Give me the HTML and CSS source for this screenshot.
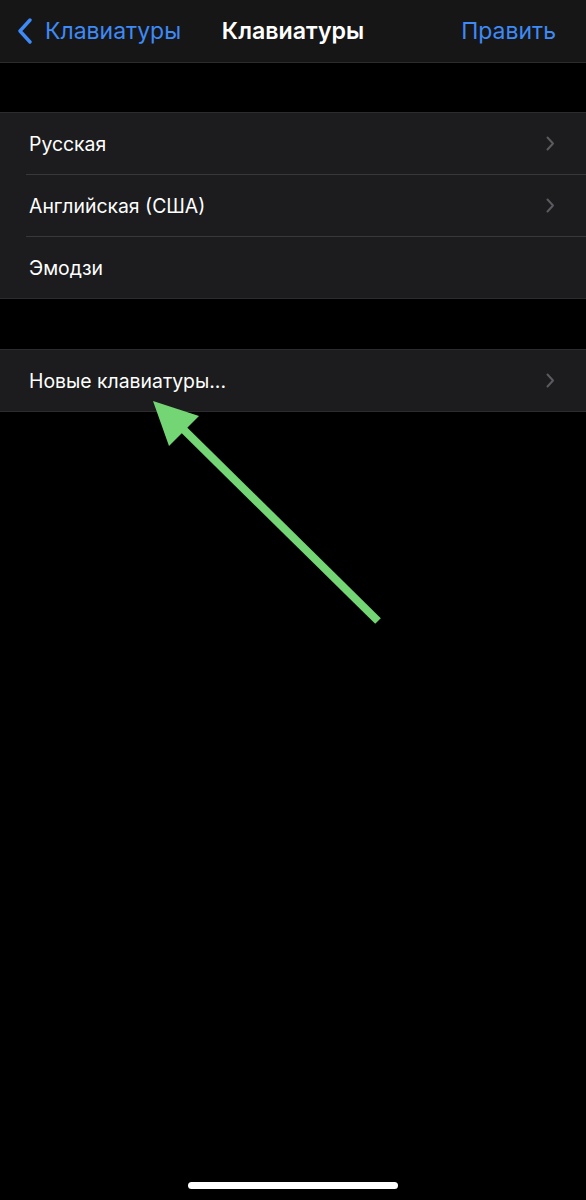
FILE: index.html
```html
<!DOCTYPE html>
<html lang="ru">

<head>
    <meta charset="UTF-8">
    <meta name="viewport" content="width=device-width, initial-scale=1.0">
    <title>Клавиатуры</title>
    <link rel="stylesheet" href="styles.css">
</head>

<body>
    <div class="screen">
        <div class="nav">
            <a class="nav-back" href="#">
                <svg class="back-chevron" width="16" height="26" viewBox="0 0 16 26">
                    <path d="M13 2 L3 13 L13 24" fill="none" stroke="currentColor" stroke-width="3.4"
                        stroke-linecap="round" stroke-linejoin="round" />
                </svg>
                <span>Клавиатуры</span>
            </a>
            <div class="nav-title">Клавиатуры</div>
            <a class="nav-action" href="#">Править</a>
        </div>

        <div class="group">
            <div class="row">
                <span class="row-label">Русская</span>
                <svg class="chevron" width="9" height="15" viewBox="0 0 9 15">
                    <path d="M1.5 1.5 L7 7.5 L1.5 13.5" fill="none" stroke="currentColor" stroke-width="2"
                        stroke-linecap="round" stroke-linejoin="round" />
                </svg>
            </div>
            <div class="row">
                <span class="row-label">Английская (США)</span>
                <svg class="chevron" width="9" height="15" viewBox="0 0 9 15">
                    <path d="M1.5 1.5 L7 7.5 L1.5 13.5" fill="none" stroke="currentColor" stroke-width="2"
                        stroke-linecap="round" stroke-linejoin="round" />
                </svg>
            </div>
            <div class="row">
                <span class="row-label">Эмодзи</span>
            </div>
        </div>

        <div class="group">
            <div class="row">
                <span class="row-label">Новые клавиатуры...</span>
                <svg class="chevron" width="9" height="15" viewBox="0 0 9 15">
                    <path d="M1.5 1.5 L7 7.5 L1.5 13.5" fill="none" stroke="currentColor" stroke-width="2"
                        stroke-linecap="round" stroke-linejoin="round" />
                </svg>
            </div>
        </div>

        <div class="home-indicator"></div>

        <!-- annotation arrow drawn over the screenshot -->
        <svg class="arrow" width="586" height="1200" viewBox="0 0 586 1200">
            <line x1="378" y1="621" x2="178" y2="424" stroke="#73d574" stroke-width="8" />
            <polygon points="153,401 199,416 169,446" fill="#73d574" />
        </svg>
    </div>
</body>

</html>
```

FILE: styles.css
```css
* {
    margin: 0;
    padding: 0;
    box-sizing: border-box;
}

body {
    background-color: #000;
    color: #fff;
    font-family: Inter, 'Noto Sans', 'Liberation Sans', sans-serif;
}

.screen {
    position: relative;
    width: 586px;
    height: 1200px;
    display: flex;
    flex-direction: column;
    overflow: hidden;
}

.nav {
    height: 63px;
    display: grid;
    grid-template-columns: 1fr auto 1fr;
    align-items: center;
    padding: 0 17px;
    background-color: #161616;
    border-bottom: 1px solid #2c2c2e;
}

.nav a {
    color: #3e8af6;
    text-decoration: none;
    font-size: 23px;
}

.nav-back {
    display: flex;
    align-items: center;
    gap: 12px;
}

.back-chevron {
    color: #3e8af6;
}

.nav-title {
    font-size: 23.2px;
    font-weight: 600;
    color: #fff;
}

.nav-action {
    justify-self: end;
    margin-right: 13px;
}

.group {
    margin-top: 49px;
    background-color: #1c1c1e;
    border-top: 1px solid #2c2c2e;
    border-bottom: 1px solid #2c2c2e;
}

.group + .group {
    margin-top: 50px;
}

.row {
    height: 61px;
    display: flex;
    align-items: center;
    justify-content: space-between;
    padding: 0 31px 0 29px;
}

.row + .row {
    height: 62px;
    border-top: 1px solid #38383a;
    margin-left: 26px;
    padding-left: 3px;
}

.row-label {
    font-size: 19.4px;
    color: #fff;
}

.chevron {
    color: #5a5a5f;
}

.home-indicator {
    width: 210px;
    height: 7px;
    border-radius: 4px;
    background-color: #fff;
    margin: auto auto 11px;
}

.arrow {
    position: absolute;
    top: 0;
    left: 0;
    pointer-events: none;
}
```
